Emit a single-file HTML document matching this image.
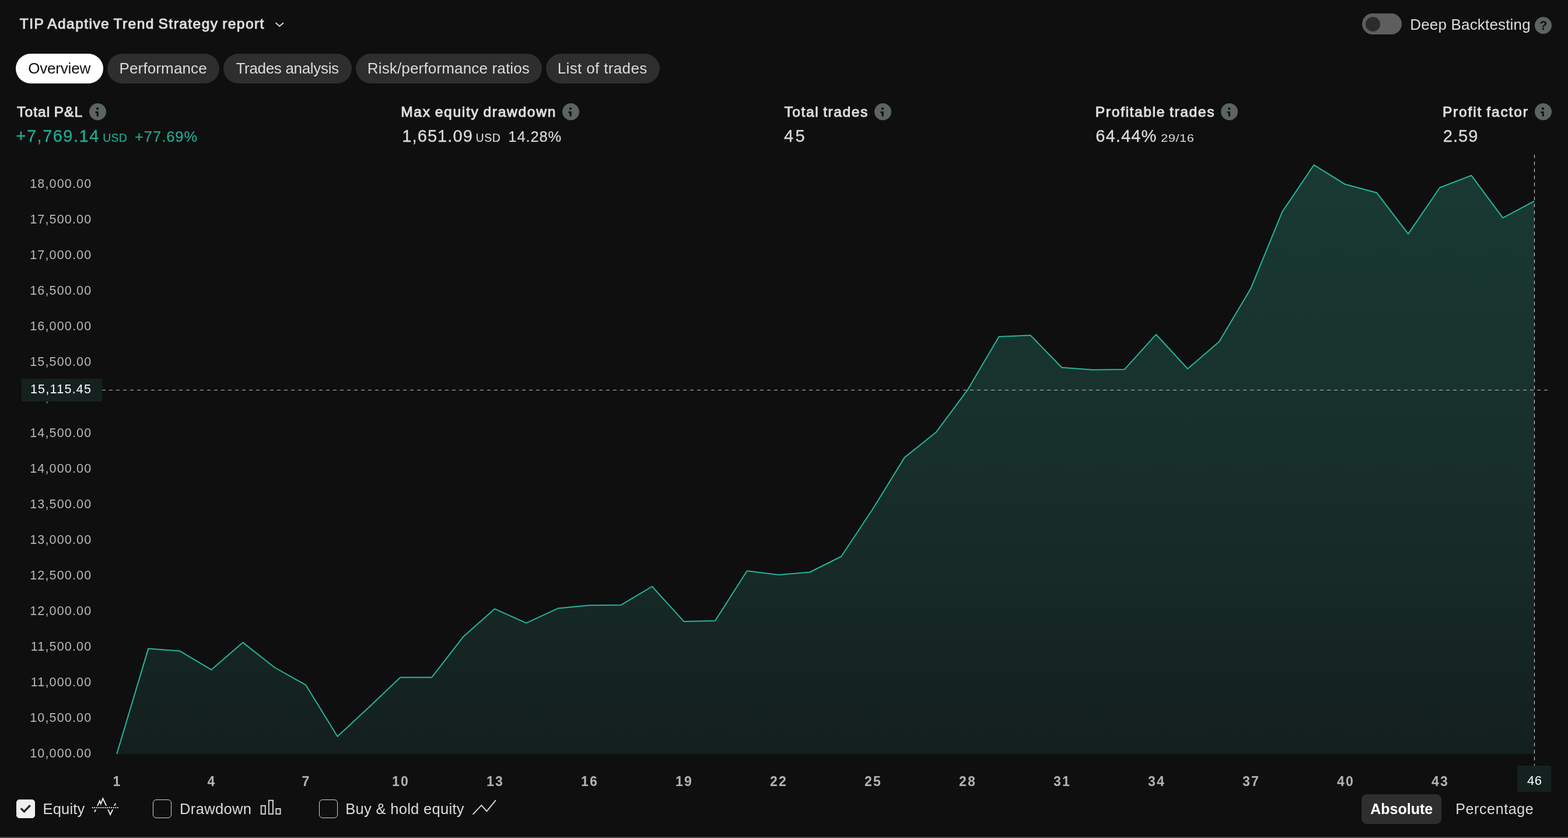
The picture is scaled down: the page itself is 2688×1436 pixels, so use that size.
<!DOCTYPE html>
<html lang="en"><head><meta charset="utf-8"><title>TIP Adaptive Trend Strategy report</title>
<style>
html{margin:0;padding:0;background:#0f0f0f;}
body{margin:0;padding:0;will-change:transform;}
body{width:2688px;height:1436px;position:relative;overflow:hidden;font-family:"Liberation Sans",sans-serif;color:#dbdbdb;}
.t{position:absolute;white-space:nowrap;line-height:1;}
.abs{position:absolute;}
.pill{position:absolute;top:92px;height:51px;border-radius:26px;background:#2e2e2e;}
.pill.on{background:#ffffff;}
.ico{position:absolute;width:29px;height:29px;border-radius:50%;background:#5b6462;}
.cb{position:absolute;top:1370px;width:32px;height:32px;box-sizing:border-box;border:1.5px solid #d6d6d6;border-radius:6px;}
.cb.on{background:#f0f0f0;border-color:#f0f0f0;border-radius:5px;}
svg{position:absolute;left:0;top:0;overflow:visible;}
</style></head><body>

<header>
<span class="t" style="left:33.80px;top:29.36px;font-size:24.5px;letter-spacing:1.45px;font-weight:400;-webkit-text-stroke:1px;word-spacing:-1.5px;color:#dedede;">TIP Adaptive Trend Strategy report</span>
<svg width="2688" height="90"><polyline points="472.5,39 479.2,45 486,39" fill="none" stroke="#dbdbdb" stroke-width="2"/></svg>
<div class="abs" style="left:2335px;top:23px;width:68px;height:36px;border-radius:18px;background:#5e5e5e;"></div>
<div class="abs" style="left:2340.5px;top:28.5px;width:25px;height:25px;border-radius:50%;background:#2b2b2b;"></div>
<span class="t" style="left:2417.20px;top:29.29px;font-size:26px;letter-spacing:0.18px;font-weight:400;color:#dedede;">Deep Backtesting</span>
<div class="ico" style="left:2630.8px;top:28.7px;"></div>
<span class="t" style="left:2639.3px;top:33.6px;font-size:21.5px;font-weight:700;color:#0f0f0f;">?</span>
</header>
<nav>
<div class="pill on" role="tab" style="left:27px;width:150px;"><span class="t" style="left:21.30px;top:12.49px;font-size:26px;letter-spacing:-0.21px;font-weight:400;color:#0f0f0f;">Overview</span></div>
<div class="pill" role="tab" style="left:184.2px;width:191.5px;"><span class="t" style="left:20.40px;top:12.49px;font-size:26px;letter-spacing:0.12px;font-weight:400;color:#dbdbdb;">Performance</span></div>
<div class="pill" role="tab" style="left:383.4px;width:219.3px;"><span class="t" style="left:21.10px;top:12.49px;font-size:26px;letter-spacing:-0.32px;font-weight:400;color:#dbdbdb;">Trades analysis</span></div>
<div class="pill" role="tab" style="left:610.4px;width:318.3px;"><span class="t" style="left:19.40px;top:12.49px;font-size:26px;letter-spacing:0.16px;font-weight:400;color:#dbdbdb;">Risk/performance ratios</span></div>
<div class="pill" role="tab" style="left:936.0px;width:194.7px;"><span class="t" style="left:19.80px;top:12.49px;font-size:26px;letter-spacing:0.35px;font-weight:400;color:#dbdbdb;">List of trades</span></div>
</nav>
<section>
<span class="t" style="left:29.10px;top:179.56px;font-size:24.5px;letter-spacing:1.09px;font-weight:400;-webkit-text-stroke:1px;word-spacing:-1.5px;color:#dedede;">Total P&amp;L</span>
<span class="t" style="left:687.20px;top:179.56px;font-size:24.5px;letter-spacing:1.73px;font-weight:400;-webkit-text-stroke:1px;word-spacing:-1.5px;color:#dedede;">Max equity drawdown</span>
<span class="t" style="left:1344.50px;top:179.56px;font-size:24.5px;letter-spacing:1.6px;font-weight:400;-webkit-text-stroke:1px;word-spacing:-1.5px;color:#dedede;">Total trades</span>
<span class="t" style="left:1877.80px;top:179.56px;font-size:24.5px;letter-spacing:1.67px;font-weight:400;-webkit-text-stroke:1px;word-spacing:-1.5px;color:#dedede;">Profitable trades</span>
<span class="t" style="left:2472.90px;top:179.56px;font-size:24.5px;letter-spacing:1.85px;font-weight:400;-webkit-text-stroke:1px;word-spacing:-1.5px;color:#dedede;">Profit factor</span>
<div class="ico" style="left:152.9px;top:176.6px;"></div>
<svg width="2688" height="260"><circle cx="167.1" cy="186.2" r="2.1" fill="#0f0f0f"/><path d="M163.5,191 h5.3 v8.6 h-3.1 v-5.9 h-2.2 z" fill="#0f0f0f"/></svg>
<div class="ico" style="left:963.8px;top:176.6px;"></div>
<svg width="2688" height="260"><circle cx="978.0" cy="186.2" r="2.1" fill="#0f0f0f"/><path d="M974.4,191 h5.3 v8.6 h-3.1 v-5.9 h-2.2 z" fill="#0f0f0f"/></svg>
<div class="ico" style="left:1498.8px;top:176.6px;"></div>
<svg width="2688" height="260"><circle cx="1513.0" cy="186.2" r="2.1" fill="#0f0f0f"/><path d="M1509.4,191 h5.3 v8.6 h-3.1 v-5.9 h-2.2 z" fill="#0f0f0f"/></svg>
<div class="ico" style="left:2093.0px;top:176.6px;"></div>
<svg width="2688" height="260"><circle cx="2107.2" cy="186.2" r="2.1" fill="#0f0f0f"/><path d="M2103.6,191 h5.3 v8.6 h-3.1 v-5.9 h-2.2 z" fill="#0f0f0f"/></svg>
<div class="ico" style="left:2630.8px;top:176.6px;"></div>
<svg width="2688" height="260"><circle cx="2645.0" cy="186.2" r="2.1" fill="#0f0f0f"/><path d="M2641.4,191 h5.3 v8.6 h-3.1 v-5.9 h-2.2 z" fill="#0f0f0f"/></svg>
<span class="t" style="left:27.60px;top:218.75px;font-size:29px;letter-spacing:1.48px;font-weight:400;color:#22ab94;-webkit-text-stroke:0.3px;">+7,769.14</span>
<span class="t" style="left:176.20px;top:226.79px;font-size:19.5px;letter-spacing:0.21px;font-weight:400;color:#22ab94;-webkit-text-stroke:0.15px;">USD</span>
<span class="t" style="left:231.00px;top:221.71px;font-size:25.5px;letter-spacing:0.97px;font-weight:400;color:#22ab94;-webkit-text-stroke:0.2px;">+77.69%</span>
<span class="t" style="left:689.30px;top:218.75px;font-size:29px;letter-spacing:1.09px;font-weight:400;-webkit-text-stroke:0.3px;">1,651.09</span>
<span class="t" style="left:815.50px;top:226.79px;font-size:19.5px;letter-spacing:0.56px;font-weight:400;-webkit-text-stroke:0.15px;">USD</span>
<span class="t" style="left:871.30px;top:221.71px;font-size:25.5px;letter-spacing:0.9px;font-weight:400;-webkit-text-stroke:0.2px;">14.28%</span>
<span class="t" style="left:1344.00px;top:218.75px;font-size:29px;letter-spacing:3.27px;font-weight:400;-webkit-text-stroke:0.3px;">45</span>
<span class="t" style="left:1878.30px;top:218.75px;font-size:29px;letter-spacing:1.15px;font-weight:400;-webkit-text-stroke:0.3px;">64.44%</span>
<span class="t" style="left:1990.30px;top:227.54px;font-size:18.5px;letter-spacing:2.67px;font-weight:400;letter-spacing:0.5px;transform:scaleX(1.18);transform-origin:0 0;">29/16</span>
<span class="t" style="left:2473.80px;top:218.75px;font-size:29px;letter-spacing:1.03px;font-weight:400;-webkit-text-stroke:0.3px;">2.59</span>
</section>
<main>
<svg width="2688" height="1436">
<defs><linearGradient id="g" gradientUnits="userSpaceOnUse" x1="0" y1="265" x2="0" y2="1292">
<stop offset="0" stop-color="#193a33"/><stop offset="0.4255" stop-color="#18312c"/><stop offset="0.7196" stop-color="#162925"/><stop offset="1" stop-color="#131f1d"/></linearGradient></defs>
<polygon points="200.2,1292 200.2,1292.0 254.3,1111.4 308.4,1115.6 362.3,1147.7 416.2,1100.9 470.3,1143.5 524.4,1173.9 578.5,1262.0 632.4,1212.0 686.3,1160.7 740.2,1160.7 794.2,1091.1 848.1,1043.3 902.1,1067.7 956.2,1042.6 1010.0,1037.3 1064.4,1036.8 1117.9,1005.0 1172.6,1065.1 1226.0,1063.8 1280.6,978.3 1334.8,984.9 1388.2,980.5 1442.2,953.5 1496.3,872.0 1550.7,783.9 1604.6,740.8 1658.5,668.4 1712.4,577.0 1766.3,574.4 1820.2,629.8 1874.0,633.8 1927.8,632.9 1981.9,573.2 2036.0,632.0 2090.0,585.4 2144.1,494.6 2198.2,362.9 2252.3,282.7 2306.0,315.8 2360.0,330.2 2414.1,400.9 2468.2,321.5 2522.3,300.6 2576.3,373.4 2630.2,344.6 2630.2,1292" fill="url(#g)"/>
<polyline points="200.2,1292.0 254.3,1111.4 308.4,1115.6 362.3,1147.7 416.2,1100.9 470.3,1143.5 524.4,1173.9 578.5,1262.0 632.4,1212.0 686.3,1160.7 740.2,1160.7 794.2,1091.1 848.1,1043.3 902.1,1067.7 956.2,1042.6 1010.0,1037.3 1064.4,1036.8 1117.9,1005.0 1172.6,1065.1 1226.0,1063.8 1280.6,978.3 1334.8,984.9 1388.2,980.5 1442.2,953.5 1496.3,872.0 1550.7,783.9 1604.6,740.8 1658.5,668.4 1712.4,577.0 1766.3,574.4 1820.2,629.8 1874.0,633.8 1927.8,632.9 1981.9,573.2 2036.0,632.0 2090.0,585.4 2144.1,494.6 2198.2,362.9 2252.3,282.7 2306.0,315.8 2360.0,330.2 2414.1,400.9 2468.2,321.5 2522.3,300.6 2576.3,373.4 2630.2,344.6" fill="none" stroke="#26b59c" stroke-width="2" stroke-linejoin="round"/>
<line x1="175" y1="668.5" x2="2654" y2="668.5" stroke="#c4c4c4" stroke-width="1.2" stroke-dasharray="6 6"/>
<line x1="2630.5" y1="265" x2="2630.5" y2="1312" stroke="#c4c4c4" stroke-width="1.2" stroke-dasharray="6 6"/>
</svg>
<span class="t" style="right:2530.7px;top:304.50px;font-size:21.5px;letter-spacing:1.16px;color:#b9b9b9;">18,000.00</span>
<span class="t" style="right:2530.7px;top:365.50px;font-size:21.5px;letter-spacing:1.16px;color:#b9b9b9;">17,500.00</span>
<span class="t" style="right:2530.7px;top:426.50px;font-size:21.5px;letter-spacing:1.16px;color:#b9b9b9;">17,000.00</span>
<span class="t" style="right:2530.7px;top:487.50px;font-size:21.5px;letter-spacing:1.16px;color:#b9b9b9;">16,500.00</span>
<span class="t" style="right:2530.7px;top:548.50px;font-size:21.5px;letter-spacing:1.16px;color:#b9b9b9;">16,000.00</span>
<span class="t" style="right:2530.7px;top:609.50px;font-size:21.5px;letter-spacing:1.16px;color:#b9b9b9;">15,500.00</span>
<span class="t" style="right:2530.7px;top:670.50px;font-size:21.5px;letter-spacing:1.16px;color:#b9b9b9;">15,000.00</span>
<span class="t" style="right:2530.7px;top:731.50px;font-size:21.5px;letter-spacing:1.16px;color:#b9b9b9;">14,500.00</span>
<span class="t" style="right:2530.7px;top:792.50px;font-size:21.5px;letter-spacing:1.16px;color:#b9b9b9;">14,000.00</span>
<span class="t" style="right:2530.7px;top:853.50px;font-size:21.5px;letter-spacing:1.16px;color:#b9b9b9;">13,500.00</span>
<span class="t" style="right:2530.7px;top:914.50px;font-size:21.5px;letter-spacing:1.16px;color:#b9b9b9;">13,000.00</span>
<span class="t" style="right:2530.7px;top:975.50px;font-size:21.5px;letter-spacing:1.16px;color:#b9b9b9;">12,500.00</span>
<span class="t" style="right:2530.7px;top:1036.50px;font-size:21.5px;letter-spacing:1.16px;color:#b9b9b9;">12,000.00</span>
<span class="t" style="right:2530.7px;top:1097.50px;font-size:21.5px;letter-spacing:1.16px;color:#b9b9b9;">11,500.00</span>
<span class="t" style="right:2530.7px;top:1158.50px;font-size:21.5px;letter-spacing:1.16px;color:#b9b9b9;">11,000.00</span>
<span class="t" style="right:2530.7px;top:1219.50px;font-size:21.5px;letter-spacing:1.16px;color:#b9b9b9;">10,500.00</span>
<span class="t" style="right:2530.7px;top:1280.50px;font-size:21.5px;letter-spacing:1.16px;color:#b9b9b9;">10,000.00</span>
<div class="abs" style="left:37.4px;top:649.2px;width:137.7px;height:38.8px;background:#15211f;"></div>
<span class="t" style="right:2530.7px;top:656.80px;font-size:21.5px;letter-spacing:1.26px;color:#ffffff;">15,115.45</span>
<span class="t" style="left:150px;width:100px;text-align:center;top:1327.63px;font-size:23px;letter-spacing:2.21px;text-indent:2.21px;font-weight:700;color:#b4b4b4;">1</span>
<span class="t" style="left:312px;width:100px;text-align:center;top:1327.63px;font-size:23px;letter-spacing:2.21px;text-indent:2.21px;font-weight:700;color:#b4b4b4;">4</span>
<span class="t" style="left:474px;width:100px;text-align:center;top:1327.63px;font-size:23px;letter-spacing:2.21px;text-indent:2.21px;font-weight:700;color:#b4b4b4;">7</span>
<span class="t" style="left:636px;width:100px;text-align:center;top:1327.63px;font-size:23px;letter-spacing:2.21px;text-indent:2.21px;font-weight:700;color:#b4b4b4;">10</span>
<span class="t" style="left:798px;width:100px;text-align:center;top:1327.63px;font-size:23px;letter-spacing:2.21px;text-indent:2.21px;font-weight:700;color:#b4b4b4;">13</span>
<span class="t" style="left:960px;width:100px;text-align:center;top:1327.63px;font-size:23px;letter-spacing:2.21px;text-indent:2.21px;font-weight:700;color:#b4b4b4;">16</span>
<span class="t" style="left:1122px;width:100px;text-align:center;top:1327.63px;font-size:23px;letter-spacing:2.21px;text-indent:2.21px;font-weight:700;color:#b4b4b4;">19</span>
<span class="t" style="left:1284px;width:100px;text-align:center;top:1327.63px;font-size:23px;letter-spacing:2.21px;text-indent:2.21px;font-weight:700;color:#b4b4b4;">22</span>
<span class="t" style="left:1446px;width:100px;text-align:center;top:1327.63px;font-size:23px;letter-spacing:2.21px;text-indent:2.21px;font-weight:700;color:#b4b4b4;">25</span>
<span class="t" style="left:1608px;width:100px;text-align:center;top:1327.63px;font-size:23px;letter-spacing:2.21px;text-indent:2.21px;font-weight:700;color:#b4b4b4;">28</span>
<span class="t" style="left:1770px;width:100px;text-align:center;top:1327.63px;font-size:23px;letter-spacing:2.21px;text-indent:2.21px;font-weight:700;color:#b4b4b4;">31</span>
<span class="t" style="left:1932px;width:100px;text-align:center;top:1327.63px;font-size:23px;letter-spacing:2.21px;text-indent:2.21px;font-weight:700;color:#b4b4b4;">34</span>
<span class="t" style="left:2094px;width:100px;text-align:center;top:1327.63px;font-size:23px;letter-spacing:2.21px;text-indent:2.21px;font-weight:700;color:#b4b4b4;">37</span>
<span class="t" style="left:2256px;width:100px;text-align:center;top:1327.63px;font-size:23px;letter-spacing:2.21px;text-indent:2.21px;font-weight:700;color:#b4b4b4;">40</span>
<span class="t" style="left:2418px;width:100px;text-align:center;top:1327.63px;font-size:23px;letter-spacing:2.21px;text-indent:2.21px;font-weight:700;color:#b4b4b4;">43</span>
<div class="abs" style="left:2601px;top:1312px;width:58px;height:45px;background:#15211f;"></div>
<span class="t" style="left:2618.10px;top:1327.47px;font-size:22px;letter-spacing:0.46px;font-weight:400;color:#ffffff;">46</span>
</main>
<footer>
<div class="cb on" style="left:28px;"></div>
<svg width="2688" height="1436"><polyline points="35.8,1385.1 41.4,1390.8 51.8,1380" fill="none" stroke="#2a2a2a" stroke-width="3.4"/></svg>
<span class="t" style="left:73.60px;top:1373.51px;font-size:25.5px;letter-spacing:0.16px;font-weight:400;">Equity</span>
<svg width="2688" height="1436"><g fill="none" stroke="#e4e4e4" stroke-width="2">
<polyline points="162.1,1391.5 170.9,1372.4 172.7,1377.7 176.4,1368.3 189.1,1395.8 198.2,1376.8"/></g>
<rect x="157" y="1380.9" width="46" height="6.3" fill="#0f0f0f"/>
<line x1="157.7" y1="1384.1" x2="202.8" y2="1384.1" stroke="#e4e4e4" stroke-width="2" stroke-dasharray="2 1.6"/></svg>
<div class="cb" style="left:262px;"></div>
<span class="t" style="left:308.00px;top:1373.51px;font-size:25.5px;letter-spacing:0.36px;font-weight:400;">Drawdown</span>
<svg width="2688" height="1436"><g fill="none" stroke="#d6d6d6" stroke-width="2">
<rect x="447.7" y="1380.7" width="7.1" height="14.1"/><rect x="460.8" y="1371.6" width="7.1" height="23.2"/><rect x="473.4" y="1385.9" width="7.1" height="8.9"/></g></svg>
<div class="cb" style="left:546.5px;"></div>
<span class="t" style="left:592.20px;top:1373.51px;font-size:25.5px;letter-spacing:0.31px;font-weight:400;">Buy &amp; hold equity</span>
<svg width="2688" height="1436"><polyline points="810.6,1395.6 825.3,1379.9 834.4,1390.2 849.9,1371.2" fill="none" stroke="#d6d6d6" stroke-width="2"/></svg>
<div class="abs" role="button" style="left:2334px;top:1361px;width:137px;height:51px;border-radius:9px;background:#2e2e2e;"><span class="t" style="left:15.20px;top:13.03px;font-size:25px;letter-spacing:0.02px;font-weight:700;color:#ffffff;">Absolute</span></div>
<span class="t" style="left:2495.20px;top:1373.53px;font-size:25px;letter-spacing:0.63px;font-weight:400;color:#dbdbdb;">Percentage</span>
<div class="abs" style="left:0;top:1434px;width:2688px;height:2px;background:#424442;"></div>
</footer>
</body></html>
